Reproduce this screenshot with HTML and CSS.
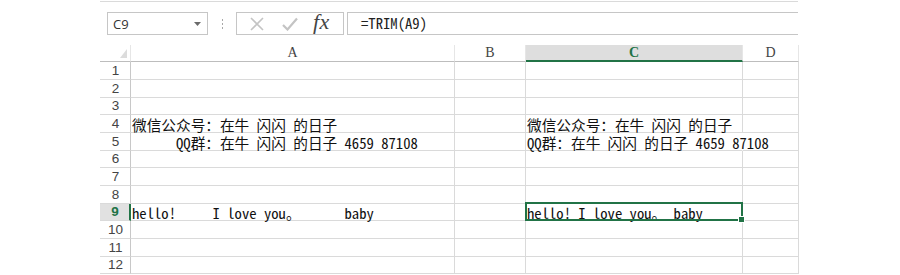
FILE: index.html
```html
<!DOCTYPE html>
<html lang="zh-CN">
<head>
<meta charset="utf-8">
<title>TRIM</title>
<link rel="stylesheet" href="styles.css">
</head>
<body>
<div class="app">
  <div class="toprule"></div>
  <div class="fbar">
    <div class="namebox">
      <span class="nametext">C9</span>
      <svg class="dd" width="7" height="4" viewBox="0 0 7 4"><path d="M0 0H7L3.5 4Z" fill="#6b6b6b"/></svg>
    </div>
    <div class="grip"><i></i><i></i><i></i></div>
    <div class="fxbox">
      <svg class="ico" width="14" height="14" viewBox="0 0 14 14"><path d="M1 1L13 13M13 1L1 13" stroke="#c4c4c4" stroke-width="1.6" fill="none"/></svg>
      <svg class="ico" width="16" height="14" viewBox="0 0 16 14"><path d="M1 8L5.5 12.5L15 1.5" stroke="#c4c4c4" stroke-width="2.2" fill="none"/></svg>
      <span class="fx">fx</span>
    </div>
    <div class="formula">=TRIM(A9)</div>
  </div>
  <div class="sheet">
    <div class="ch corner"><svg width="7" height="9" viewBox="0 0 7 9"><path d="M7 0V9H0Z" fill="#dcdcdc"/></svg></div>
    <div class="ch">A</div>
    <div class="ch">B</div>
    <div class="ch sel">C</div>
    <div class="ch">D</div>

    <div class="rh">1</div><div class="c"></div><div class="c"></div><div class="c"></div><div class="c"></div>
    <div class="rh">2</div><div class="c"></div><div class="c"></div><div class="c"></div><div class="c"></div>
    <div class="rh">3</div><div class="c"></div><div class="c"></div><div class="c"></div><div class="c"></div>
    <div class="rh">4</div><div class="c">微信公众号：在牛 闪闪 的日子</div><div class="c"></div><div class="c">微信公众号：在牛 闪闪 的日子</div><div class="c"></div>
    <div class="rh">5</div><div class="c">      QQ群：在牛 闪闪 的日子 4659 87108</div><div class="c"></div><div class="c spill">QQ群：在牛 闪闪 的日子 4659 87108</div><div class="c"></div>
    <div class="rh">6</div><div class="c"></div><div class="c"></div><div class="c"></div><div class="c"></div>
    <div class="rh">7</div><div class="c"></div><div class="c"></div><div class="c"></div><div class="c"></div>
    <div class="rh">8</div><div class="c"></div><div class="c"></div><div class="c"></div><div class="c"></div>
    <div class="rh sel">9</div><div class="c">hello!     I love you。      baby</div><div class="c"></div><div class="c active">hello! I love you。 baby<span class="selbox"><span class="handle"></span></span></div><div class="c"></div>
    <div class="rh">10</div><div class="c"></div><div class="c"></div><div class="c"></div><div class="c"></div>
    <div class="rh">11</div><div class="c"></div><div class="c"></div><div class="c"></div><div class="c"></div>
    <div class="rh">12</div><div class="c"></div><div class="c"></div><div class="c"></div><div class="c"></div>
  </div>
</div>
</body>
</html>
```
FILE: styles.css
```css
html, body {
  margin: 0;
  padding: 0;
  background: #ffffff;
}
body {
  font-family: "Noto Sans Mono CJK SC", "Noto Sans CJK SC", "DejaVu Sans Mono", monospace;
  color: #222;
}
.app {
  margin-left: 100px;
  width: 698px;
}
.toprule {
  margin-top: 1px;
  border-top: 1px solid #dadada;
}
.fbar {
  display: flex;
  align-items: flex-start;
  height: 43px;
  padding-top: 10px;
  box-sizing: border-box;
}
.namebox {
  margin-left: 7px;
  width: 101px;
  height: 23px;
  box-sizing: border-box;
  border: 1px solid #c6c6c6;
  display: flex;
  align-items: center;
  justify-content: space-between;
  padding: 0 6px 0 5px;
}
.nametext {
  font-family: "Open Sans", "Noto Sans", sans-serif;
  font-size: 13px;
  color: #333;
}
.dd { margin-top: 1px; }
.grip {
  width: 28px;
  height: 23px;
  display: flex;
  flex-direction: column;
  align-items: center;
  justify-content: center;
  gap: 2px;
}
.grip i {
  display: block;
  width: 1px;
  height: 2px;
  background: #a8a8a8;
}
.fxbox {
  width: 108px;
  height: 23px;
  box-sizing: border-box;
  border: 1px solid #c6c6c6;
  display: flex;
  align-items: center;
  padding-left: 13px;
  gap: 18px;
}
.fx {
  font-family: "Liberation Serif", serif;
  font-style: italic;
  font-size: 22px;
  color: #444;
  line-height: 1;
  margin-left: -3px;
  margin-top: -3px;
  letter-spacing: 0.5px;
}
.formula {
  margin-left: 3px;
  flex: 1;
  height: 23px;
  box-sizing: border-box;
  border: 1px solid #c6c6c6;
  border-right: none;
  padding-left: 13px;
  font-size: 14.67px;
  line-height: 20px;
  white-space: pre;
}
.sheet {
  display: grid;
  grid-template-columns: 31px 324px 71px 217px 56px;
  grid-template-rows: 17px 18px 18px 17px 18px 18px 17px 18px 18px 17px 18px 18px 17px;
}
.sheet > div {
  box-sizing: border-box;
  border-right: 1px solid #dadada;
  border-bottom: 1px solid #dadada;
  white-space: pre;
  font-size: 14.67px;
  line-height: 15px;
}
.ch {
  display: flex;
  align-items: center;
  justify-content: center;
  color: #444;
  font-family: "Liberation Serif", serif;
  font-size: 14px !important;
  line-height: 14px !important;
  border-bottom-color: #bdbdbd !important;
  border-right-color: #e6e6e6 !important;
}
.ch.corner {
  align-items: flex-end;
  justify-content: flex-end;
  padding: 0 3px 3px 0;
}
.ch.sel {
  background: #dedede;
  color: #217346;
  font-weight: bold;
  border-bottom: 2px solid #217346 !important;
}
.rh {
  display: flex;
  align-items: flex-end;
  justify-content: center;
  color: #444;
  font-family: "Liberation Sans", sans-serif;
  font-size: 13.5px !important;
  line-height: 14px !important;
  padding: 0 0 1px 1px;
  border-right-color: #c8c8c8 !important;
}
.rh.sel {
  background: #e1e1e1;
  color: #217346;
  font-weight: bold;
  border-right: 2px solid #217346 !important;
}
.c {
  padding-left: 1px;
  display: flex;
  align-items: flex-end;
  color: #111;
}
.c.spill {
  border-right-color: transparent !important;
}
.c.active {
  position: relative;
}
.selbox {
  position: absolute;
  left: -1px;
  top: -2px;
  right: -1px;
  bottom: -1px;
  border: 2px solid #217346;
  z-index: 2;
}
.handle {
  position: absolute;
  right: -4px;
  bottom: -4px;
  width: 5px;
  height: 5px;
  background: #217346;
  border: 1px solid #ffffff;
}
```
